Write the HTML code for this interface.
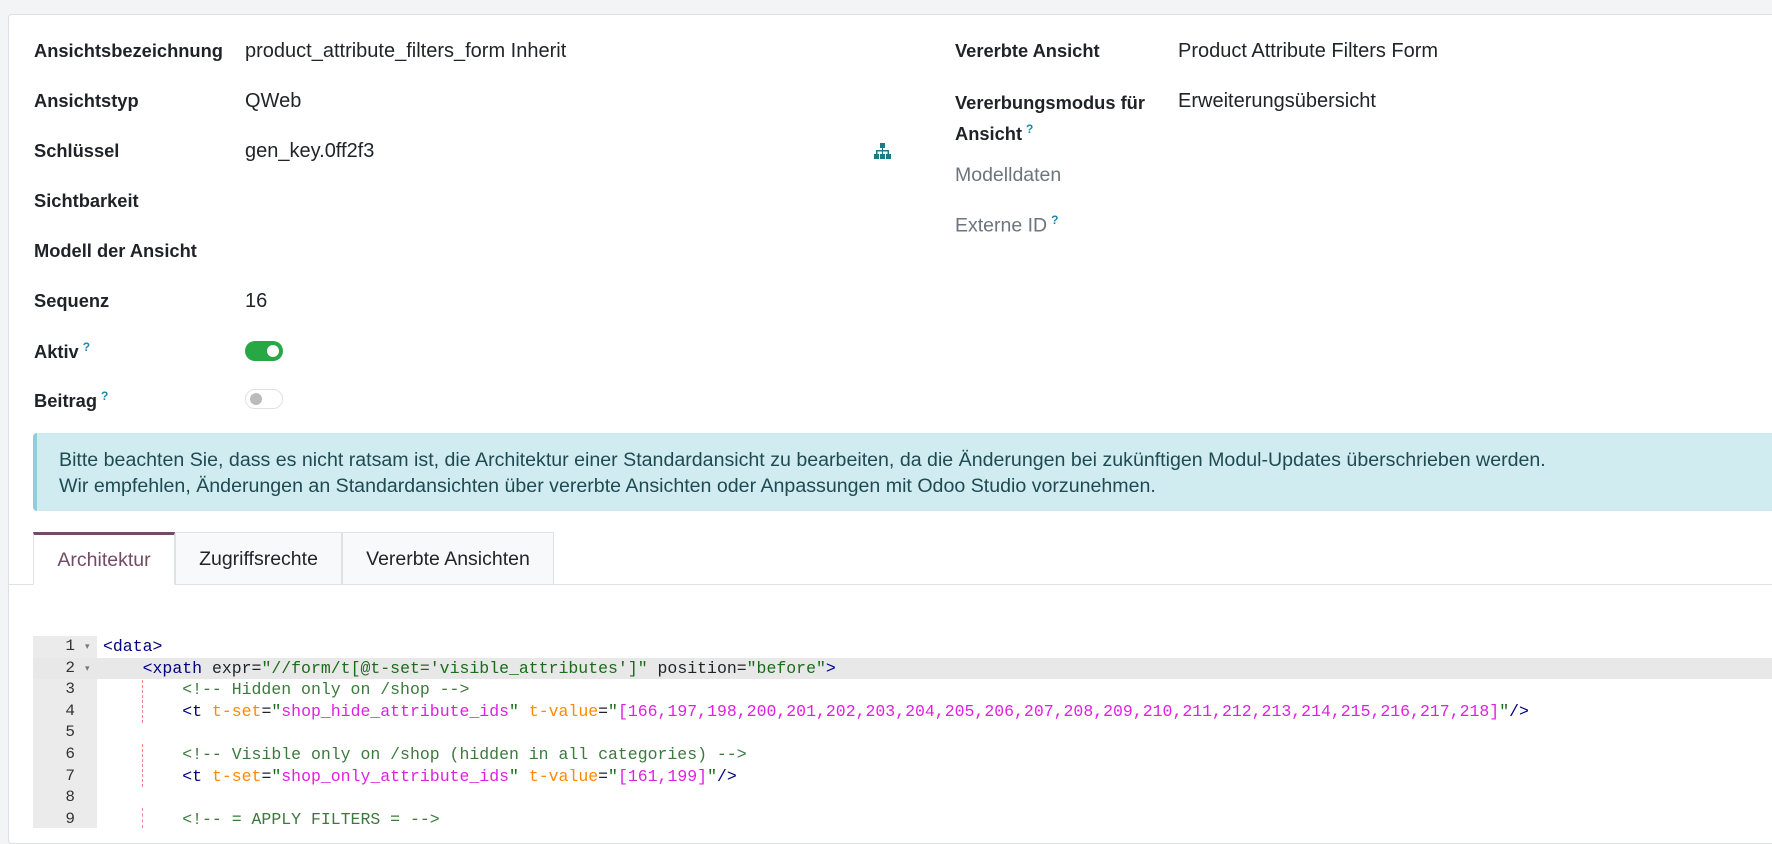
<!DOCTYPE html>
<html><head><meta charset="utf-8"><style>
*{box-sizing:border-box;margin:0;padding:0}
body{width:1772px;height:828px;overflow:hidden;background:#f3f4f6;font-family:"Liberation Sans",sans-serif;color:#1f2328;position:relative}
.card{position:absolute;left:8px;top:14px;width:1780px;height:830px;background:#fff;border:1px solid #dcdfe3;border-radius:4px}
.l,.v{position:absolute;line-height:22px;white-space:nowrap}
.l{left:34px;font-weight:bold;color:#1f2328;font-size:18.3px}
.v{left:245px;color:#212529;font-size:20px}
.q{color:#1a8aa8;font-size:12px;vertical-align:super;margin-left:4px;font-weight:bold}
.tog{position:absolute;left:245px;width:38px;height:20px;border-radius:10px}
.alert{position:absolute;left:33px;top:433px;width:1760px;height:78px;background:#d1ecf1;border-left:4px solid #8ecfdb;border-radius:4px;font-size:19.6px;line-height:26px;color:#1e4a52;padding:14px 0 0 22px;white-space:nowrap}
.tab{position:absolute;top:532px;height:53px;font-size:19.5px;line-height:53px;text-align:center;border:1px solid #dee2e6;background:#f8f9fa;color:#212529}
.code{position:absolute;left:0;font-family:"Liberation Mono",monospace;font-size:16.5px;white-space:pre;line-height:21.6px}
.n{color:#000080}.a{color:#1f2328}.o{color:#ff8a00}.s{color:#1a6b1a}.m{color:#e020e0}.c{color:#3b7a3b}
.ln{position:absolute;left:33px;width:64px;text-align:right;padding-right:22px;font-family:"Liberation Mono",monospace;font-size:16px;color:#333;line-height:21.6px}
</style></head><body>
<div class="card"></div>
<div class="l" style="top:40px">Ansichtsbezeichnung</div><div class="v" style="top:40px">product_attribute_filters_form Inherit</div>
<div class="l" style="top:90px">Ansichtstyp</div><div class="v" style="top:90px">QWeb</div>
<div class="l" style="top:140px">Schlüssel</div><div class="v" style="top:140px">gen_key.0ff2f3</div>
<div class="l" style="top:190px">Sichtbarkeit</div>
<div class="l" style="top:240px">Modell der Ansicht</div>
<div class="l" style="top:290px">Sequenz</div><div class="v" style="top:290px">16</div>
<div class="l" style="top:336px">Aktiv<span class="q">?</span></div>
<div class="tog" style="top:341px;background:#28a745"><div style="position:absolute;right:4px;top:4px;width:12px;height:12px;border-radius:6px;background:#fff"></div></div>
<div class="l" style="top:385px">Beitrag<span class="q">?</span></div>
<div class="tog" style="top:389px;background:#fff;border:1px solid #dee2e6"><div style="position:absolute;left:4px;top:3px;width:12px;height:12px;border-radius:6px;background:#bbb"></div></div>
<svg style="position:absolute;left:874px;top:143px" width="17" height="16" viewBox="0 0 17 16" fill="#1c7c86"><rect x="6" y="0" width="5" height="5"/><rect x="8" y="5" width="1" height="3"/><rect x="2" y="7" width="13" height="1.5"/><rect x="2" y="7" width="1.5" height="4"/><rect x="13.5" y="7" width="1.5" height="4"/><rect x="8" y="7" width="1" height="4"/><rect x="0" y="11" width="5" height="5"/><rect x="6" y="11" width="5" height="5"/><rect x="12" y="11" width="5" height="5"/></svg>
<div class="l" style="left:955px;top:40px">Vererbte Ansicht</div><div class="v" style="left:1178px;top:40px">Product Attribute Filters Form</div>
<div class="l" style="left:955px;top:90px;line-height:26px">Vererbungsmodus für<br>Ansicht<span class="q">?</span></div><div class="v" style="left:1178px;top:90px">Erweiterungsübersicht</div>
<div class="l" style="left:955px;top:164px;font-weight:normal;color:#6c757d;font-size:19.5px">Modelldaten</div>
<div class="l" style="left:955px;top:209px;font-weight:normal;color:#6c757d;font-size:19.5px">Externe ID<span class="q">?</span></div>
<div class="alert">Bitte beachten Sie, dass es nicht ratsam ist, die Architektur einer Standardansicht zu bearbeiten, da die Änderungen bei zukünftigen Modul-Updates überschrieben werden.<br>Wir empfehlen, Änderungen an Standardansichten über vererbte Ansichten oder Anpassungen mit Odoo Studio vorzunehmen.</div>
<div style="position:absolute;left:9px;top:584px;width:1770px;height:1px;background:#dee2e6"></div>
<div class="tab" style="left:33px;width:142px;background:#fff;border-top:3px solid #714b67;border-bottom:1px solid #fff;color:#714b67;line-height:51px">Architektur</div>
<div class="tab" style="left:175px;width:167px">Zugriffsrechte</div>
<div class="tab" style="left:342px;width:212px">Vererbte Ansichten</div>
<div style="position:absolute;left:33px;top:636px;width:64px;height:192px;background:#ebebeb"></div>
<div style="position:absolute;left:33px;top:657.6px;width:1760px;height:21.6px;background:#e8e8e8"></div>
<div style="position:absolute;left:142px;top:680px;height:43px;border-left:1px dashed #e88"></div>
<div style="position:absolute;left:142px;top:744px;height:43px;border-left:1px dashed #e88"></div>
<div style="position:absolute;left:142px;top:808px;height:20px;border-left:1px dashed #e88"></div>
<div class="ln" style="top:636px">1<br>2<br>3<br>4<br>5<br>6<br>7<br>8<br>9</div>
<div style="position:absolute;left:85px;top:636px;font-size:9px;line-height:21.6px;color:#777">▾<br>▾</div>
<div class="code" style="left:103px;top:636px"><span class="n">&lt;data&gt;</span>
    <span class="n">&lt;xpath</span> <span class="a">expr</span>=<span class="s">"//form/t[@t-set='visible_attributes']"</span> <span class="a">position</span>=<span class="s">"before"</span><span class="n">&gt;</span>
        <span class="c">&lt;!-- Hidden only on /shop --&gt;</span>
        <span class="n">&lt;t</span> <span class="o">t-set</span>=<span class="s">"</span><span class="m">shop_hide_attribute_ids</span><span class="s">"</span> <span class="o">t-value</span>=<span class="s">"</span><span class="m">[166,197,198,200,201,202,203,204,205,206,207,208,209,210,211,212,213,214,215,216,217,218]</span><span class="s">"</span><span class="n">/&gt;</span>

        <span class="c">&lt;!-- Visible only on /shop (hidden in all categories) --&gt;</span>
        <span class="n">&lt;t</span> <span class="o">t-set</span>=<span class="s">"</span><span class="m">shop_only_attribute_ids</span><span class="s">"</span> <span class="o">t-value</span>=<span class="s">"</span><span class="m">[161,199]</span><span class="s">"</span><span class="n">/&gt;</span>

        <span class="c">&lt;!-- = APPLY FILTERS = --&gt;</span></div>
</body></html>
